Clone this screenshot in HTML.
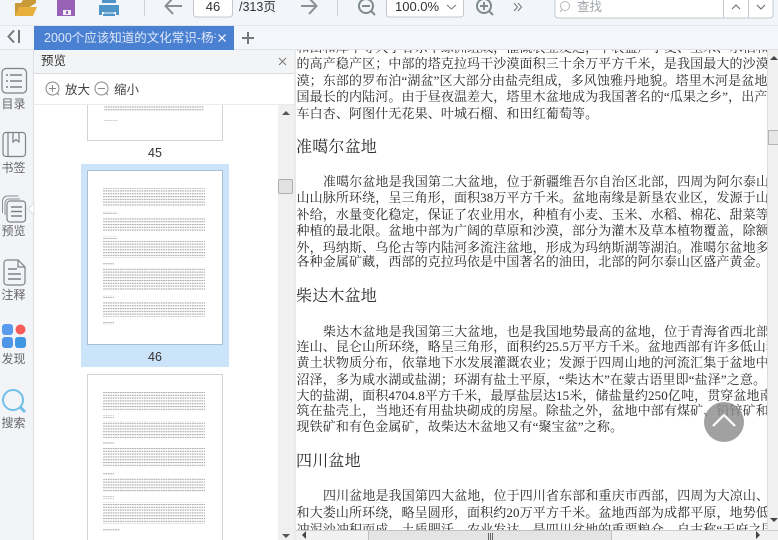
<!DOCTYPE html>
<html><head><meta charset="utf-8">
<style>
html,body{margin:0;padding:0;width:778px;height:540px;overflow:hidden;background:#fff}
body{position:relative;font-family:"Liberation Sans","Noto Sans CJK SC",sans-serif;color:#333}
.a{position:absolute}
#view{position:absolute;left:297px;top:50px;width:470px;height:480px;overflow:hidden;background:#fff}
#view div{position:absolute;left:-0.5px;white-space:nowrap;font:13px/16px "Liberation Serif","Noto Serif CJK SC",serif;letter-spacing:.12px;color:#2a2a2a}
#view div.h{font-size:16px;line-height:20px;left:-1px;letter-spacing:.2px}
.lab{position:absolute;left:0;width:27px;text-align:center;font-size:12px;line-height:14px;color:#666}
</style></head><body>

<!-- toolbar -->
<div class="a" style="left:0;top:0;width:778px;height:25px;background:#f2f5f9;border-bottom:1px solid #e2e5e9"></div>
<div class="a" style="left:0;top:26px;width:778px;height:24px;background:#f3f6fa;border-bottom:1px solid #dfe2e6;box-sizing:border-box"></div>
<svg class="a" style="left:0;top:0" width="778" height="50">
 <path d="M15 16V3h6l2 -3h13v3z" fill="#c99a38"/><path d="M15 16l4-9h18l-4 9z" fill="#e8ae3e"/>
 <path d="M57 0h18v16H57z" fill="#9a62b6"/><path d="M63 10h8v5h-8z" fill="#f2eef6"/><path d="M66 11h2v3h-2z" fill="#9a62b6"/>
 <path d="M99 5h20v10h-3v-3h-14v3h-3z" fill="#4f95c8"/><path d="M102 0h14v3h-14z" fill="#4f95c8"/><path d="M103 14h12v2h-12z" fill="#4f95c8" /><path d="M104 10h10M104 13h10" stroke="#4f95c8"/>
 <path d="M144.500 0v16M337.500 0v16" stroke="#cfd2d6"/>
 <path d="M182 6h-16M173 -2l-7.500 8 7.500 8" fill="none" stroke="#8a8f94" stroke-width="2"/>
 <path d="M301 6h15M309 -2l7.500 8-7.500 8" fill="none" stroke="#8a8f94" stroke-width="2"/>
 <rect x="193.500" y="-5" width="39" height="22" rx="3" fill="#fff" stroke="#c4c8cc"/>
 <circle cx="366" cy="6" r="7" fill="none" stroke="#7f8a90" stroke-width="2"/><path d="M362 6h8M371 11l4 4" stroke="#7f8a90" stroke-width="2"/>
 <rect x="386.500" y="-5" width="77" height="22" rx="3" fill="#fff" stroke="#c4c8cc"/>
 <path d="M447 5l4.500 4 4.500-4" fill="none" stroke="#777"/>
 <circle cx="484" cy="6" r="7" fill="none" stroke="#7f8a90" stroke-width="2"/><path d="M480 6h8M484 2v8M489 11l4 4" stroke="#7f8a90" stroke-width="2"/>
 <path d="M514 3l3.500 4-3.500 4M518 3l3.500 4-3.500 4" fill="none" stroke="#777"/>
 <rect x="555" y="-5" width="218" height="23" rx="3" fill="#fff" stroke="#c4c8cc"/>
 <path d="M723.500 -5v23M748.500 -5v23" stroke="#c4c8cc"/>
 <circle cx="565" cy="6" r="4.500" fill="none" stroke="#b4b8bc"/><path d="M562 10l-2 2" stroke="#b4b8bc"/>
 <path d="M732 9l4-4 4 4M757 5l4 4 4-4" fill="none" stroke="#666"/>
 <path d="M14 30.500l-5.500 6 5.500 6" fill="none" stroke="#777" stroke-width="2"/><path d="M19 30v13" stroke="#777" stroke-width="2"/>
 <path d="M248 32v12M242 38h12" stroke="#777" stroke-width="2"/>
</svg>
<div class="a" style="left:193px;top:-1px;width:40px;text-align:center;font-size:13px;line-height:16px;color:#333">46</div>
<div class="a" style="left:239px;top:-1px;font-size:12.500px;line-height:16px;color:#333">/313页</div>
<div class="a" style="left:395px;top:-1px;font-size:13px;line-height:16px;color:#333">100.0%</div>
<div class="a" style="left:577px;top:-1px;font-size:12.500px;line-height:16px;color:#a0a4a8">查找</div>

<!-- tab -->
<div class="a" style="left:34px;top:26px;width:200px;height:24px;background:#4a80d2"></div>
<div class="a" style="left:44px;top:29px;width:172px;overflow:hidden;white-space:nowrap;font-size:12.500px;line-height:18px;color:#dfe9f8">2000个应该知道的文化常识-杨书</div>
<svg class="a" style="left:217px;top:33px" width="10" height="10"><path d="M1.500 1.500l7 7M8.500 1.500l-7 7" stroke="#fff" stroke-width="1.200"/></svg>

<!-- sidebar -->
<div class="a" style="left:0;top:50px;width:34px;height:490px;background:#f2f4f7;border-right:1px solid #dcdfe3;box-sizing:border-box"></div>
<svg class="a" style="left:0;top:50px" width="34" height="490">
 <rect x="2" y="18.500" width="24.500" height="24.500" rx="4" fill="none" stroke="#7b8288" stroke-width="1.200"/>
 <path d="M6 25h2M10 25h12M6 31h2M10 31h12M6 37h2M10 37h12" stroke="#7b8288" stroke-width="1.500"/>
 <rect x="3" y="82.500" width="22.500" height="24" rx="3" fill="none" stroke="#7b8288" stroke-width="1.200"/>
 <path d="M8 83v23M13 83v9l3-2.500 3 2.500v-9" fill="none" stroke="#7b8288" stroke-width="1.200"/>
 <path d="M2.500 163v-12a5 5 0 0 1 5-5h11M5 165v-12a4 4 0 0 1 4-4h11" fill="none" stroke="#8a9096"/>
 <rect x="7" y="151" width="18.500" height="21" rx="3" fill="#f2f4f7" stroke="#7b8288" stroke-width="1.200"/>
 <path d="M11 157h11M11 161.500h11M11 166h11" stroke="#7b8288" stroke-width="1.500"/>
 <path d="M7 235a3 3 0 0 1-3-3v-19a3 3 0 0 1 3-3h11l7 7v15a3 3 0 0 1-3 3zM18 210v7h7" fill="none" stroke="#7b8288" stroke-width="1.200"/>
 <path d="M8 219h9M8 224h13M8 229h13" stroke="#7b8288" stroke-width="1.500"/>
 <rect x="2" y="274" width="11" height="11" rx="3" fill="#5b9bee"/>
 <circle cx="20.500" cy="279.500" r="5" fill="#f55b58"/>
 <rect x="2" y="287" width="11" height="11" rx="3" fill="#4f96ea"/>
 <rect x="15" y="287" width="11" height="11" rx="3" fill="#3f96e2"/>
 <circle cx="13" cy="350" r="10" fill="none" stroke="#6fc0e8" stroke-width="2"/>
 <path d="M20.500 357.500l4.500 4.500" stroke="#6fc0e8" stroke-width="3"/>
</svg>
<div class="lab" style="top:97px">目录</div>
<div class="lab" style="top:161px">书签</div>
<div class="lab" style="top:224px">预览</div>
<div class="lab" style="top:288px">注释</div>
<div class="lab" style="top:352px">发现</div>
<div class="lab" style="top:416px">搜索</div>

<!-- panel -->
<div class="a" style="left:34px;top:50px;width:261px;height:490px;background:#fff"></div>
<div class="a" style="left:34px;top:50px;width:261px;height:24px;background:#f3f4f6;border-bottom:1px solid #d9dbde;box-sizing:border-box"></div>
<div class="a" style="left:41px;top:53px;font-size:12.500px;line-height:16px;color:#333">预览</div>
<svg class="a" style="left:278px;top:57px" width="9" height="9"><path d="M1 1l7 7M8 1l-7 7" stroke="#777"/></svg>
<div class="a" style="left:34px;top:104px;width:261px;height:1px;background:#e8eaec"></div>
<svg class="a" style="left:45px;top:81px" width="16" height="16"><circle cx="7.500" cy="7.500" r="6.500" fill="none" stroke="#888"/><path d="M4 7.500h7M7.500 4v7" stroke="#888"/><path d="M12 12l2 2" stroke="#888"/></svg>
<svg class="a" style="left:94px;top:81px" width="16" height="16"><circle cx="7.500" cy="7.500" r="6.500" fill="none" stroke="#888"/><path d="M4 7.500h7" stroke="#888"/><path d="M12 12l2 2" stroke="#888"/></svg>
<div class="a" style="left:65px;top:82px;font-size:12.500px;line-height:16px;color:#444">放大</div>
<div class="a" style="left:114px;top:82px;font-size:12.500px;line-height:16px;color:#444">缩小</div>

<div class="a" style="left:81px;top:164px;width:148px;height:203px;background:#cce4f9"></div>
<svg class="a" style="left:0;top:0" width="296" height="540">
 <defs><pattern id="t" patternUnits="userSpaceOnUse" width="2.400" height="2.800"><rect width="1.700" height="1.100" fill="#a8a8a8"/></pattern></defs>
 <path d="M87.500 105v35.500h135V105" fill="#fff" stroke="#d3d3d3"/>
 <rect x="104" y="105" width="100" height="6" fill="url(#t)"/><rect x="104" y="119" width="14" height="2" fill="url(#t)"/>
 <rect x="87.500" y="170.500" width="135" height="174" fill="#fff" stroke="#a9bfd2"/>
 <g fill="url(#t)">
  <rect x="103" y="188" width="102" height="19"/><rect x="103" y="211" width="14" height="3"/>
  <rect x="103" y="217" width="102" height="15"/><rect x="103" y="236" width="14" height="3"/>
  <rect x="103" y="241" width="102" height="17"/><rect x="103" y="263" width="11" height="3"/>
  <rect x="103" y="268" width="102" height="22"/><rect x="103" y="295" width="11" height="3"/>
  <rect x="103" y="301" width="102" height="16"/><rect x="103" y="322" width="11" height="3"/>
 </g>
 <rect x="87.500" y="374.500" width="135" height="170" fill="#fff" stroke="#d3d3d3"/>
 <g fill="url(#t)">
  <rect x="103" y="391" width="102" height="20"/><rect x="103" y="415" width="11" height="3"/>
  <rect x="103" y="421" width="102" height="17"/><rect x="103" y="442" width="11" height="3"/>
  <rect x="103" y="448" width="102" height="19"/><rect x="103" y="472" width="11" height="3"/>
  <rect x="103" y="478" width="102" height="14"/><rect x="103" y="496" width="11" height="3"/>
  <rect x="103" y="502" width="102" height="22"/><rect x="103" y="529" width="17" height="3"/>
 </g>
 <!-- panel scrollbar -->
 <rect x="278" y="105" width="16" height="435" fill="#f0f0f0"/>
 <rect x="294" y="50" width="3" height="490" fill="#eaeaea"/>
 <rect x="278.500" y="179.500" width="14" height="14" rx="1.500" fill="#e2e2e2" stroke="#aeaeae"/>
 <path d="M282 115l4-4 4 4z" fill="#555"/><path d="M282 534h8l-4 4z" fill="#555"/>
 <!-- pointer to panel -->
 <path d="M34 203l-6 6 6 6z" fill="#fff" stroke="#dcdfe3"/>
</svg>
<div class="a" style="left:87px;top:146px;width:136px;text-align:center;font-size:12.500px;line-height:15px;color:#333">45</div>
<div class="a" style="left:87px;top:350px;width:136px;text-align:center;font-size:12.500px;line-height:15px;color:#333">46</div>

<!-- document -->
<div id="view">
 <div style="top:-10px">和田和库车等大于谷东干绿洲组成，灌溉农业发达，中农盛产小麦、玉米、水稻和棉花</div>
 <div style="top:6px">的高产稳产区；中部的塔克拉玛干沙漠面积三十余万平方千米，是我国最大的沙漠</div>
 <div style="top:23px">漠；东部的罗布泊“湖盆”区大部分由盐壳组成，多风蚀雅丹地貌。塔里木河是盆地</div>
 <div style="top:39px">国最长的内陆河。由于昼夜温差大，塔里木盆地成为我国著名的“瓜果之乡”，出产</div>
 <div style="top:56px">车白杏、阿图什无花果、叶城石榴、和田红葡萄等。</div>
 <div class="h" style="top:88px">准噶尔盆地</div>
 <div style="top:124px;left:26px">准噶尔盆地是我国第二大盆地，位于新疆维吾尔自治区北部，四周为阿尔泰山</div>
 <div style="top:140px">山山脉所环绕，呈三角形，面积38万平方千米。盆地南缘是新垦农业区，发源于山</div>
 <div style="top:157px">补给，水量变化稳定，保证了农业用水，种植有小麦、玉米、水稻、棉花、甜菜等</div>
 <div style="top:173px">种植的最北限。盆地中部为广阔的草原和沙漠，部分为灌木及草本植物覆盖，除额</div>
 <div style="top:190px">外，玛纳斯、乌伦古等内陆河多流注盆地，形成为玛纳斯湖等湖泊。准噶尔盆地多</div>
 <div style="top:204px">各种金属矿藏，西部的克拉玛依是中国著名的油田，北部的阿尔泰山区盛产黄金。</div>
 <div class="h" style="top:237px">柴达木盆地</div>
 <div style="top:274px;left:26px">柴达木盆地是我国第三大盆地，也是我国地势最高的盆地，位于青海省西北部</div>
 <div style="top:289px">连山、昆仑山所环绕，略呈三角形，面积约25.5万平方千米。盆地西部有许多低山和</div>
 <div style="top:305px">黄土状物质分布，依靠地下水发展灌溉农业；发源于四周山地的河流汇集于盆地中</div>
 <div style="top:322px">沼泽，多为咸水湖或盐湖；环湖有盐土平原，“柴达木”在蒙古语里即“盐泽”之意。</div>
 <div style="top:338px">大的盐湖，面积4704.8平方千米，最厚盐层达15米，储盐量约250亿吨，贯穿盆地南</div>
 <div style="top:353px">筑在盐壳上，当地还有用盐块砌成的房屋。除盐之外，盆地中部有煤矿、铅锌矿和</div>
 <div style="top:369px">现铁矿和有色金属矿，故柴达木盆地又有“聚宝盆”之称。</div>
 <div class="h" style="top:402px">四川盆地</div>
 <div style="top:438px;left:26px">四川盆地是我国第四大盆地，位于四川省东部和重庆市西部，四周为大凉山、</div>
 <div style="top:455px">和大娄山所环绕，略呈圆形，面积约20万平方千米。盆地西部为成都平原，地势低</div>
 <div style="top:472px">冲泥沙冲积而成，土质肥沃，农业发达，是四川盆地的重要粮仓，自古称“天府之国”</div>
</div>

<!-- doc scrollbars -->
<div class="a" style="left:767px;top:50px;width:11px;height:490px;background:#f1f1f1;border-left:1px solid #dedede;box-sizing:border-box"></div>
<div class="a" style="left:768px;top:130px;width:10px;height:15px;background:#e6e6e6;border:1px solid #b4b4b4;box-sizing:border-box;border-right:none"></div>
<svg class="a" style="left:770px;top:54px" width="8" height="8"><path d="M0 6l4-4 4 4z" fill="#444"/></svg>
<svg class="a" style="left:770px;top:516px" width="8" height="8"><path d="M0 2h8l-4 4z" fill="#444"/></svg>
<div class="a" style="left:296px;top:530px;width:482px;height:10px;background:#f1f1f1;border-top:1px solid #cfcfcf;box-sizing:border-box"></div>
<div class="a" style="left:368px;top:530px;width:244px;height:10px;background:#e4e4e4;border:1px solid #c0c0c0;box-sizing:border-box;border-bottom:none"></div>
<svg class="a" style="left:296px;top:530px" width="482" height="10">
 <path d="M6 5l4-4v8z" fill="#444"/><path d="M460 1l4 4-4 4z" fill="#444"/>
 <path d="M192.500 3v7M194.500 3v7M196.500 3v7" stroke="#666"/>
</svg>

<!-- back to top -->
<svg class="a" style="left:704px;top:402px" width="40" height="40"><circle cx="20" cy="20" r="20" fill="#8c8c8c" fill-opacity=".82"/><path d="M9 24L20 13l11 11" fill="none" stroke="#fff" stroke-width="2.200"/></svg>
</body></html>
